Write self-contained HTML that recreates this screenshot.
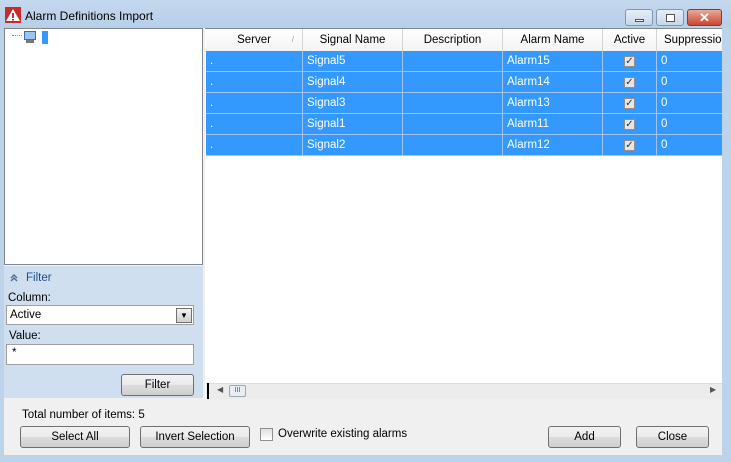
<!DOCTYPE html><html><head><style>
*{box-sizing:border-box;margin:0;padding:0}
body{width:731px;height:462px;overflow:hidden;font-family:"Liberation Sans",sans-serif;font-size:11.5px;background:#bcd3ea;position:relative}
.a{position:absolute}
.btn{position:absolute;border:1px solid #707070;border-radius:3px;background:linear-gradient(#f2f2f2,#ebebeb 50%,#dddddd 50%,#cfcfcf);text-align:center;line-height:20px;color:#000}
.cell{position:absolute;height:21px;border-right:1px solid #9fc5f0;border-bottom:1px solid #9fc5f0;color:#fff;line-height:20px;padding-left:4px}
.hd{position:absolute;top:0;height:22px;border-right:1px solid #d5d5d5;text-align:center;line-height:22px;color:#000;background:linear-gradient(#fff,#f3f3f3);overflow:hidden;white-space:nowrap}
.chk{position:absolute;width:11px;height:11px;border:1px solid #8e8f8f;background:#e6e6e6;left:21px;top:5px;font-size:10px;line-height:9px;text-align:center;color:#333}
</style></head><body>
<div class="a" style="left:0;top:0;width:731px;height:28px;background:linear-gradient(#c4d8ee,#b7cfe8)"></div>
<svg class="a" style="left:5px;top:7px" width="16" height="16"><rect x="0" y="0" width="16" height="16" fill="#c92b2b"/><polygon points="8,2 15,14 1,14" fill="#fff"/><rect x="7" y="6" width="2" height="5" fill="#c92b2b"/><rect x="7" y="12" width="2" height="1.5" fill="#c92b2b"/></svg>
<div class="a" style="left:25px;top:9px;font-size:12px">Alarm Definitions Import</div>
<div class="a" style="left:625px;top:9px;width:28px;height:17px;border:1px solid #7f97b3;border-radius:3px;background:linear-gradient(#e5eef8,#c6d7ea)"><div class="a" style="left:9px;top:9px;width:9px;height:3px;border:1px solid #555;background:#fff"></div></div>
<div class="a" style="left:656px;top:9px;width:28px;height:17px;border:1px solid #7f97b3;border-radius:3px;background:linear-gradient(#e5eef8,#c6d7ea)"><div class="a" style="left:9px;top:4px;width:9px;height:8px;border:1px solid #555;background:#fff"></div></div>
<div class="a" style="left:687px;top:9px;width:35px;height:17px;border:1px solid #8a3a2d;border-radius:3px;background:linear-gradient(#e9a99b,#c7462e);color:#fff;font-weight:bold;text-align:center;line-height:15px;font-size:13px">✕</div>
<div class="a" style="left:4px;top:28px;width:718px;height:427px;background:#f0f0f0"></div>
<div class="a" style="left:4px;top:28px;width:199px;height:237px;background:#fff;border:1px solid #828790"></div>
<div class="a" style="left:12px;top:35px;width:10px;border-top:1px dotted #888"></div>
<svg class="a" style="left:23px;top:29px" width="16" height="16"><rect x="1" y="2" width="12" height="9" fill="#3c6fb0"/><rect x="2" y="3" width="10" height="7" fill="#9cc4ee"/><rect x="3" y="11" width="8" height="3" fill="#777"/></svg>
<div class="a" style="left:42px;top:31px;width:6px;height:13px;background:#3399ff"></div>
<div class="a" style="left:4px;top:266px;width:199px;height:132px;background:#cfdff0"></div>
<svg class="a" style="left:9px;top:273px" width="10" height="10"><path d="M2 5 L5 2 L8 5 M2 8 L5 5 L8 8" stroke="#4a6a90" stroke-width="1.4" fill="none"/></svg>
<div class="a" style="left:26px;top:272px;color:#1f4e8a">Filter</div>
<div class="a" style="left:8px;top:292px">Column:</div>
<div class="a" style="left:6px;top:305px;width:188px;height:20px;background:#fff;border:1px solid #a0a0a0;padding:3px 3px;line-height:13px">Active</div>
<div class="a" style="left:176px;top:308px;width:16px;height:15px;border:1px solid #707070;background:linear-gradient(#f2f2f2,#d0d0d0);font-size:8px;text-align:center;line-height:13px">▼</div>
<div class="a" style="left:9px;top:330px">Value:</div>
<div class="a" style="left:6px;top:344px;width:188px;height:21px;background:#fff;border:1px solid #a0a0a0;padding:2px 5px">*</div>
<div class="btn" style="left:121px;top:374px;width:73px;height:22px">Filter</div>
<div class="a" style="left:205px;top:28px;width:517px;height:371px;background:#fff;border-top:1px solid #828790"></div>
<div class="a" style="left:206px;top:29px;width:516px;height:22px;overflow:hidden">
<div class="hd" style="left:0;width:97px">Server<span style="position:absolute;right:8px;color:#999;font-size:8px">/</span></div>
<div class="hd" style="left:97px;width:100px">Signal Name</div>
<div class="hd" style="left:197px;width:100px">Description</div>
<div class="hd" style="left:297px;width:100px">Alarm Name</div>
<div class="hd" style="left:397px;width:54px">Active</div>
<div class="hd" style="left:451px;width:75px;border:0;text-align:left;padding-left:7px">Suppression</div>
</div>
<div class="a" style="left:206px;top:51px;width:516px;height:105px;background:#3399ff">
<div class="cell" style="left:0;top:0;width:97px">.</div><div class="cell" style="left:97px;top:0;width:100px">Signal5</div><div class="cell" style="left:197px;top:0;width:100px"></div><div class="cell" style="left:297px;top:0;width:100px">Alarm15</div><div class="cell" style="left:397px;top:0;width:54px"><div class="chk">✓</div></div><div class="cell" style="left:451px;top:0;width:65px;border-right:0">0</div>
<div class="cell" style="left:0;top:21px;width:97px">.</div><div class="cell" style="left:97px;top:21px;width:100px">Signal4</div><div class="cell" style="left:197px;top:21px;width:100px"></div><div class="cell" style="left:297px;top:21px;width:100px">Alarm14</div><div class="cell" style="left:397px;top:21px;width:54px"><div class="chk">✓</div></div><div class="cell" style="left:451px;top:21px;width:65px;border-right:0">0</div>
<div class="cell" style="left:0;top:42px;width:97px">.</div><div class="cell" style="left:97px;top:42px;width:100px">Signal3</div><div class="cell" style="left:197px;top:42px;width:100px"></div><div class="cell" style="left:297px;top:42px;width:100px">Alarm13</div><div class="cell" style="left:397px;top:42px;width:54px"><div class="chk">✓</div></div><div class="cell" style="left:451px;top:42px;width:65px;border-right:0">0</div>
<div class="cell" style="left:0;top:63px;width:97px">.</div><div class="cell" style="left:97px;top:63px;width:100px">Signal1</div><div class="cell" style="left:197px;top:63px;width:100px"></div><div class="cell" style="left:297px;top:63px;width:100px">Alarm11</div><div class="cell" style="left:397px;top:63px;width:54px"><div class="chk">✓</div></div><div class="cell" style="left:451px;top:63px;width:65px;border-right:0">0</div>
<div class="cell" style="left:0;top:84px;width:97px">.</div><div class="cell" style="left:97px;top:84px;width:100px">Signal2</div><div class="cell" style="left:197px;top:84px;width:100px"></div><div class="cell" style="left:297px;top:84px;width:100px">Alarm12</div><div class="cell" style="left:397px;top:84px;width:54px"><div class="chk">✓</div></div><div class="cell" style="left:451px;top:84px;width:65px;border-right:0">0</div>
</div>
<div class="a" style="left:206px;top:383px;width:516px;height:16px;background:#ececec;border-top:1px solid #ddd"></div>
<div class="a" style="left:207px;top:383px;width:2px;height:16px;background:#000"></div>
<div class="a" style="left:217px;top:385px;font-size:8px;color:#555">◀</div>
<div class="a" style="left:229px;top:385px;width:17px;height:12px;border:1px solid #9aa;border-radius:2px;background:#e8eef4;font-size:7px;text-align:center;line-height:10px;color:#555">III</div>
<div class="a" style="left:710px;top:385px;font-size:8px;color:#555">▶</div>
<div class="a" style="left:22px;top:409px">Total number of items: 5</div>
<div class="btn" style="left:20px;top:426px;width:110px;height:22px">Select All</div>
<div class="btn" style="left:140px;top:426px;width:110px;height:22px">Invert Selection</div>
<div class="a" style="left:260px;top:428px;width:13px;height:13px;border:1px solid #8e8f8f;background:linear-gradient(#e0e0e0,#fff)"></div>
<div class="a" style="left:278px;top:428px">Overwrite existing alarms</div>
<div class="btn" style="left:548px;top:426px;width:73px;height:22px">Add</div>
<div class="btn" style="left:636px;top:426px;width:73px;height:22px">Close</div>
</body></html>
